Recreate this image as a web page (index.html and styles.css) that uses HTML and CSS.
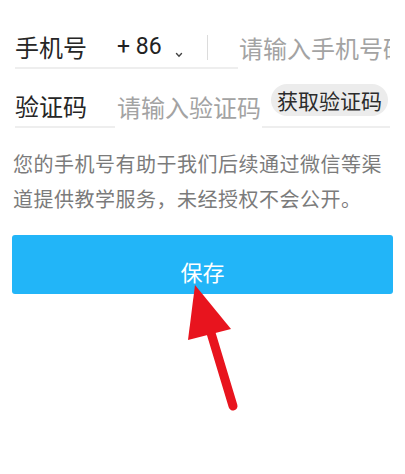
FILE: index.html
```html
<!DOCTYPE html>
<html lang="zh">
<head>
  <meta charset="utf-8">
  <title>绑定手机号</title>
  <link rel="stylesheet" href="styles.css">
</head>
<body>
  <div class="page">
    <form class="bind-form">
      <div class="row phone-row">
        <div class="field-left">
          <span class="label">手机号</span>
          <span class="area-code">+ 86</span>
          <svg class="chevron" width="8" height="6" viewBox="0 0 8 6">
            <path d="M1.5 1.5 L4 4.2 L6.5 1.5" fill="none" stroke="#444" stroke-width="1.4" stroke-linecap="round"/>
          </svg>
          <span class="divider"></span>
        </div>
        <input class="input phone-input" type="text" name="phone" placeholder="请输入手机号码">
      </div>
      <div class="row code-row">
        <div class="code-label">
          <span class="label">验证码</span>
        </div>
        <input class="input code-input" type="text" name="code" placeholder="请输入验证码">
        <div class="code-btn-wrap">
          <button type="button" class="code-btn">获取验证码</button>
        </div>
      </div>
      <p class="hint">您的手机号有助于我们后续通过微信等渠道提供教学服务，未经授权不会公开。</p>
      <button type="submit" class="save-btn">保存</button>
    </form>
    <!-- red arrow drawn over the screenshot -->
    <svg class="arrow" width="405" height="474" viewBox="0 0 405 474">
      <line x1="211" y1="333" x2="233" y2="406" stroke="#e8141e" stroke-width="9" stroke-linecap="round"/>
      <polygon points="195,285 188,340 231,329" fill="#e8141e"/>
    </svg>
  </div>
</body>
</html>
```

FILE: styles.css
```css
body {
  margin: 0;
  background-color: #fff;
  font-family: "Noto Sans CJK SC", "Noto Sans", sans-serif;
}

.page {
  position: relative;
  width: 405px;
  height: 474px;
  padding: 0 12px;
  box-sizing: border-box;
  overflow: hidden;
}

.row {
  display: flex;
  margin: 0 3px;
}

.label {
  font-size: 24px;
  color: #262626;
}

.input {
  border: none;
  outline: none;
  padding: 0;
  background: transparent;
  font-family: "Noto Sans CJK SC", sans-serif;
  font-size: 24px;
  color: #333;
  min-width: 0;
}

.input::placeholder {
  color: #a3a3a3;
}

.phone-row {
  margin-top: 26px;
  height: 43px;
}

.phone-row .field-left {
  display: flex;
  align-items: center;
  width: 223px;
  flex-shrink: 0;
  border-bottom: 2px solid #eeeeee;
  box-sizing: border-box;
}

.phone-row .label {
  width: 102px;
}

.area-code {
  font-family: Roboto, "Noto Sans", sans-serif;
  font-size: 23px;
  color: #222;
}

.chevron {
  margin-left: 13px;
  margin-top: 16px;
}

.divider {
  width: 1px;
  height: 25px;
  margin-left: 24px;
  margin-top: 2px;
  background-color: #dcdcdc;
}

.phone-input {
  flex: 1;
  margin-left: 1px;
}

.code-row {
  margin-top: 16px;
  height: 43px;
}

.code-label {
  display: flex;
  align-items: center;
  width: 100px;
  flex-shrink: 0;
  border-bottom: 2px solid #eeeeee;
  box-sizing: border-box;
}

.code-input {
  width: 145px;
  margin-left: 2px;
  flex-shrink: 0;
}

.code-btn-wrap {
  flex: 1;
  display: flex;
  justify-content: flex-end;
  align-items: flex-start;
  border-bottom: 2px solid #eeeeee;
  box-sizing: border-box;
}

.code-btn {
  height: 32px;
  width: 117px;
  margin-top: -1px;
  margin-right: 2px;
  padding: 0;
  border: none;
  border-radius: 16px;
  background-color: #ececec;
  font-family: "Noto Sans CJK SC", sans-serif;
  font-size: 21px;
  color: #2b2b2b;
  cursor: pointer;
}

.hint {
  margin: 18px 0 0 1px;
  font-size: 20px;
  letter-spacing: 0.5px;
  line-height: 35px;
  color: #7b7b7b;
}

.save-btn {
  display: block;
  width: 100%;
  height: 59px;
  margin-top: 19px;
  padding: 13px 0 0;
  border: none;
  border-radius: 3px;
  background-color: #22b5f8;
  font-family: "Noto Sans CJK SC", sans-serif;
  font-size: 22px;
  color: #fff;
  cursor: pointer;
}

.arrow {
  position: absolute;
  left: 0;
  top: 0;
  pointer-events: none;
}
```
